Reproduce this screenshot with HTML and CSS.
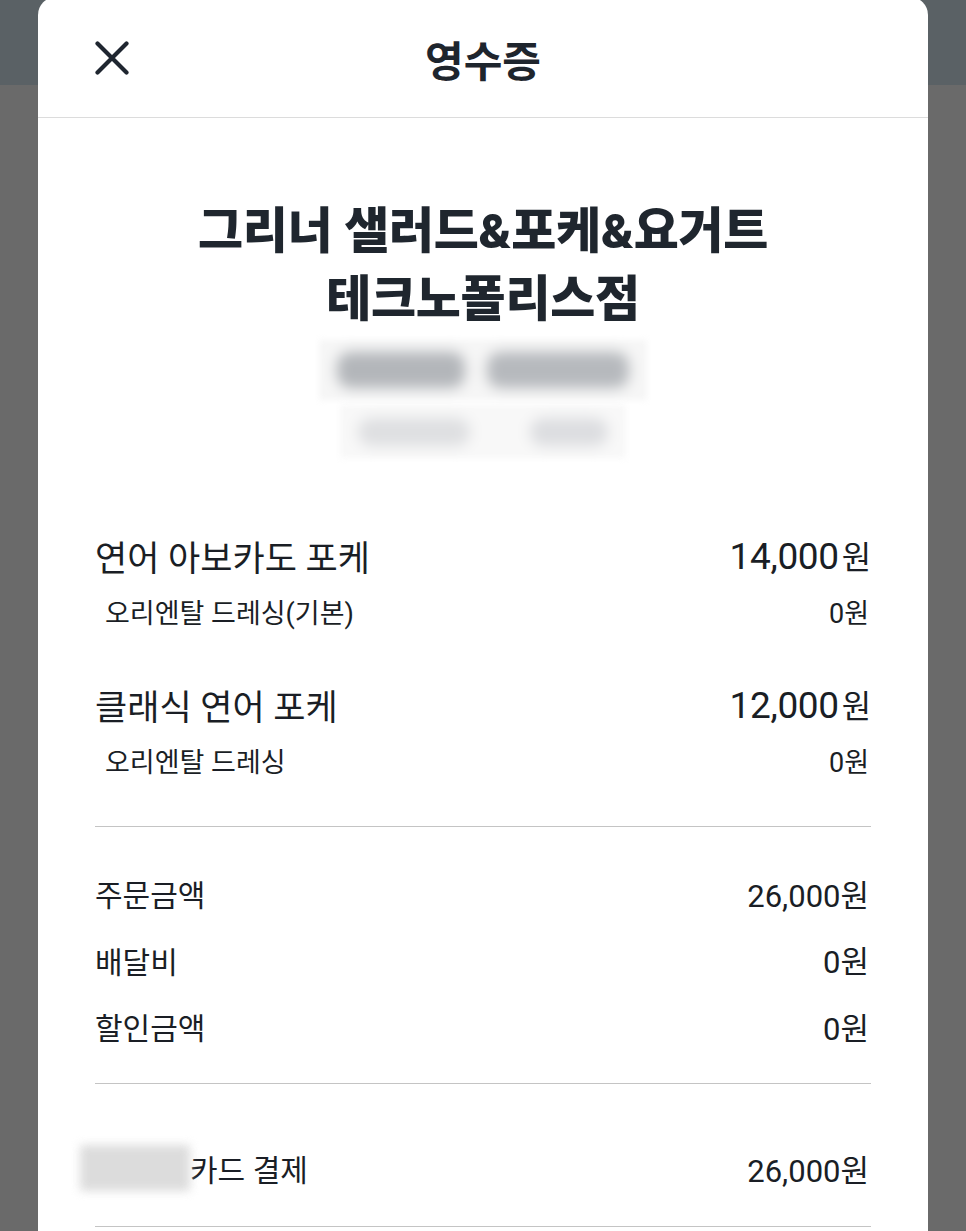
FILE: index.html
```html
<!DOCTYPE html>
<html lang="ko">
<head>
<meta charset="utf-8">
<title>영수증</title>
<link rel="stylesheet" href="styles.css">
</head>
<body>
<div class="modal">
  <header class="modal-header">
    <button class="close" aria-label="닫기">
      <svg width="34" height="34" viewBox="0 0 34 34"><path d="M2.5 2.5 L31.5 31.5 M31.5 2.5 L2.5 31.5" stroke="#1f2630" stroke-width="4.2" stroke-linecap="round" fill="none"/></svg>
    </button>
    <h1 class="modal-title">영수증</h1>
    <span></span>
  </header>
  <main class="receipt">
    <section class="store">
      <h2 class="store-name">그리너 샐러드&amp;포케&amp;요거트<br>테크노폴리스점</h2>
      <div class="blur-line blur-line-1"><span class="blob b1"></span><span class="blob b2"></span></div>
      <div class="blur-line blur-line-2"><span class="blob b3"></span><span class="blob b4"></span></div>
    </section>

    <section class="items">
      <div class="item">
        <div class="row item-row"><span class="item-name">연어 아보카도 포케</span><span class="item-price">14,000<span class="won">원</span></span></div>
        <div class="row opt-row"><span>오리엔탈 드레싱(기본)</span><span>0원</span></div>
      </div>
      <div class="item">
        <div class="row item-row"><span class="item-name">클래식 연어 포케</span><span class="item-price">12,000<span class="won">원</span></span></div>
        <div class="row opt-row"><span>오리엔탈 드레싱</span><span>0원</span></div>
      </div>
    </section>

    <section class="summary">
      <div class="row sum-row"><span class="label">주문금액</span><span>26,000원</span></div>
      <div class="row sum-row"><span class="label">배달비</span><span>0원</span></div>
      <div class="row sum-row"><span class="label">할인금액</span><span>0원</span></div>
    </section>

    <section class="payment">
      <div class="row sum-row"><span class="label"><span class="card-blur"></span>카드 결제</span><span>26,000원</span></div>
    </section>
  </main>
</div>
</body>
</html>
```

FILE: styles.css
```css
* { box-sizing: border-box; }
html, body { margin: 0; padding: 0; }
body {
  background: linear-gradient(#5a6165 0, #5a6165 85px, #6a6a6a 85px);
  min-height: 1231px;
  overflow: hidden;
  font-family: "Roboto", "Noto Sans CJK KR", sans-serif;
  color: #1a1e25;
}
.modal {
  margin: -3px 38px 0;
  background: #fff;
  border-radius: 18px 18px 0 0;
  padding-bottom: 200px;
}
.modal-header {
  height: 121px;
  border-bottom: 1px solid #dcdcdc;
  display: grid;
  grid-template-columns: 1fr auto 1fr;
  align-items: center;
  padding: 0 57px;
}
.close {
  border: 0;
  background: none;
  padding: 0;
  width: 34px;
  height: 34px;
  margin-top: 2px;
  justify-self: start;
  display: flex;
}
.modal-title {
  margin: 4px 0 0;
  font-family: "Noto Sans CJK KR", sans-serif;
  font-weight: 700;
  font-size: 42px;
  line-height: 52px;
  color: #1e252d;
}
.receipt { padding: 0 57px; }
.store { display: flex; flex-direction: column; align-items: center; }
.store-name {
  margin: 80px 0 0;
  font-family: "Roboto", "Noto Sans CJK KR", sans-serif;
  font-weight: 900;
  font-size: 49px;
  line-height: 68px;
  text-align: center;
  color: #1f262e;
  letter-spacing: -0.3px;
}
.blur-line {
  display: flex;
  justify-content: center;
  align-items: center;
  gap: 22px;
  background: #f6f6f6;
  filter: blur(3px);
}
.blur-line-1 { width: 328px; height: 60px; margin-top: 6px; }
.blur-line-2 { width: 286px; height: 53px; margin-top: 5px; background: #f8f8f8; gap: 60px; }
.blob { display: block; border-radius: 14px; filter: blur(6px); }
.b1 { width: 128px; height: 36px; background: #b3b6ba; }
.b2 { width: 142px; height: 36px; background: #b6b9bd; }
.b3 { width: 112px; height: 28px; background: #dedfe1; }
.b4 { width: 78px; height: 28px; background: #dcdde0; }

.row { display: flex; justify-content: space-between; align-items: center; }
.items {
  padding: 75px 0 48px;
  border-bottom: 1px solid #c4c4c4;
  display: flex;
  flex-direction: column;
  gap: 53px;
}
.item { display: flex; flex-direction: column; gap: 16px; }
.item-row { height: 44px; }
.item-name { font-size: 35px; }
.item-price { font-size: 37px; letter-spacing: -0.3px; }
.won { font-size: 32px; margin-left: 3px; }
.opt-row { height: 36px; font-size: 27px; padding-left: 10px; padding-right: 2px; }
.summary {
  padding: 46px 0 37px;
  border-bottom: 1px solid #c4c4c4;
  display: flex;
  flex-direction: column;
  gap: 26.5px;
}
.sum-row { height: 40px; font-size: 31px; padding-right: 2px; }
.sum-row .label { font-size: 30px; display: flex; align-items: center; }
.payment {
  padding: 64px 0 38px;
  border-bottom: 1px solid #c4c4c4;
}
.card-blur {
  display: inline-block;
  width: 110px;
  height: 46px;
  margin-left: -15px;
  background: #d4d4d4;
  filter: blur(5px);
  opacity: 0.8;
}
```
